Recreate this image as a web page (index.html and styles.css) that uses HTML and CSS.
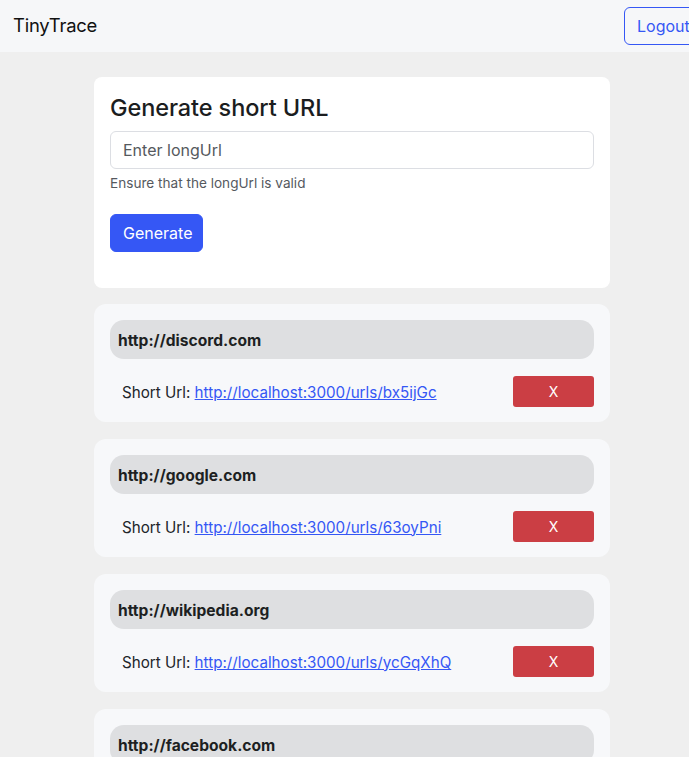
FILE: index.html
```html
<!DOCTYPE html>
<html lang="en">
<head>
<meta charset="utf-8">
<title>TinyTrace</title>
<link rel="stylesheet" href="styles.css">
</head>
<body>
<nav class="navbar">
  <span class="brand">TinyTrace</span>
  <button class="btn-logout">Logout</button>
</nav>
<main class="main">
  <section class="card form-card">
    <h3 class="title">Generate short URL</h3>
    <input class="input" type="text" placeholder="Enter longUrl">
    <div class="help">Ensure that the longUrl is valid</div>
    <button class="btn-generate">Generate</button>
  </section>

  <section class="card url-card">
    <div class="pill">http://discord.com</div>
    <div class="row">
      <span class="label">Short Url: <a class="link" href="#">http://localhost:3000/urls/bx5ijGc</a></span>
      <button class="btn-x">X</button>
    </div>
  </section>

  <section class="card url-card">
    <div class="pill">http://google.com</div>
    <div class="row">
      <span class="label">Short Url: <a class="link" href="#">http://localhost:3000/urls/63oyPni</a></span>
      <button class="btn-x">X</button>
    </div>
  </section>

  <section class="card url-card">
    <div class="pill">http://wikipedia.org</div>
    <div class="row">
      <span class="label">Short Url: <a class="link" href="#">http://localhost:3000/urls/ycGqXhQ</a></span>
      <button class="btn-x">X</button>
    </div>
  </section>

  <section class="card url-card">
    <div class="pill">http://facebook.com</div>
    <div class="row">
      <span class="label">Short Url: <a class="link" href="#">http://localhost:3000/urls/fbK9qLm</a></span>
      <button class="btn-x">X</button>
    </div>
  </section>
</main>
</body>
</html>
```

FILE: styles.css
```css
* { box-sizing: border-box; }
html, body { margin: 0; padding: 0; overflow-x: hidden; }
body {
  font-family: Inter, "Noto Sans", sans-serif;
  font-size: 16px;
  line-height: 1.5;
  color: #212529;
  background: #efefef;
  width: 704px;
}
.navbar {
  height: 52px;
  background: #f6f7f9;
  display: flex;
  align-items: center;
  justify-content: space-between;
  padding: 0 4px 0 13px;
}
.brand {
  font-size: 18.4px;
  color: #111;
  letter-spacing: -0.2px;
}
.btn-logout {
  font-family: inherit;
  font-size: 16px;
  line-height: 24px;
  color: #3557f5;
  background: transparent;
  border: 1px solid #3557f5;
  border-radius: 6px;
  padding: 6px 12px;
  width: 76px;
  text-align: left;
}
.main {
  padding: 25px 0 20px 0;
  display: flex;
  flex-direction: column;
  align-items: center;
  gap: 17px;
}
.card {
  width: 516px;
  border-radius: 12px;
  padding: 16px;
}
.form-card {
  background: #fff;
  border-radius: 8px;
  padding-bottom: 36px;
  margin-bottom: -1px;
}
.title {
  margin: 0 0 9px 0;
  font-size: 23.5px;
  font-weight: 500;
  line-height: 29px;
  color: #1b1d20;
  letter-spacing: -0.1px;
}
.input {
  display: block;
  width: 100%;
  height: 38px;
  border: 1px solid #dcdee3;
  border-radius: 6px;
  padding: 6px 12px;
  font-family: inherit;
  font-size: 16px;
  color: #212529;
  background: #fff;
}
.input::placeholder { color: #55595e; }
.help {
  margin-top: 4px;
  font-size: 13.6px;
  line-height: 21px;
  color: #55595e;
}
.btn-generate {
  margin-top: 20px;
  font-family: inherit;
  font-size: 16px;
  line-height: 24px;
  color: #fff;
  background: #3557f5;
  border: 1px solid #3557f5;
  border-radius: 6px;
  padding: 6px 12px;
  height: 38px;
  width: 93px;
}
.url-card {
  background: #f7f8fa;
  padding-bottom: 15px;
}
.pill {
  background: #dedfe1;
  border-radius: 14px;
  padding: 9px 8px 5px 8px;
  height: 39px;
  font-weight: 700;
  font-size: 15.6px;
  line-height: 24px;
  color: #1d1f22;
}
.row {
  margin-top: 17px;
  display: flex;
  align-items: center;
  justify-content: space-between;
  padding-left: 12px;
}
.label {
  display: block;
  padding-top: 3px;
  font-size: 15.2px;
  color: #212529;
}
.link {
  color: #3557f5;
  text-decoration: underline;
}
.btn-x {
  width: 81px;
  height: 31px;
  background: #cb3e44;
  color: #fff;
  border: none;
  border-radius: 3px;
  font-family: inherit;
  font-size: 14px;
}
```
